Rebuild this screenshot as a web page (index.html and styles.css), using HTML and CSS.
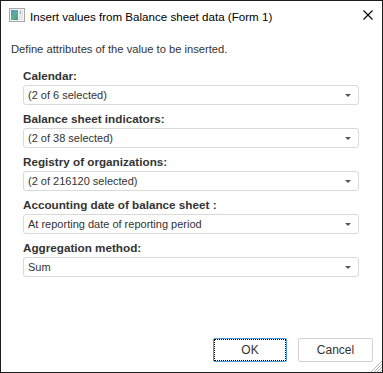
FILE: index.html
```html
<!DOCTYPE html>
<html>
<head>
<meta charset="utf-8">
<link rel="stylesheet" href="styles.css">
</head>
<body>
<div class="window">
  <div class="titlebar">
    <svg class="app-icon" width="16" height="14" viewBox="0 0 16 14">
      <defs>
        <linearGradient id="g" x1="0" y1="0" x2="1" y2="1">
          <stop offset="0" stop-color="#5a8fc0"/>
          <stop offset="0.5" stop-color="#5fae9a"/>
          <stop offset="1" stop-color="#3f9a7a"/>
        </linearGradient>
      </defs>
      <rect x="0.5" y="0.5" width="15" height="13" fill="#f4f4f4" stroke="#a8a8a8"/>
      <rect x="2" y="2" width="7" height="10" fill="url(#g)"/>
      <rect x="10" y="2" width="4" height="10" fill="#e6e6e6"/>
      <rect x="11" y="3" width="1" height="3" fill="#8fb3cf"/>
    </svg>
    <span class="title">Insert values from Balance sheet data (Form 1)</span>
    <svg class="close" width="10" height="10" viewBox="0 0 10 10">
      <path d="M0.5 0.5 L9.5 9.5 M9.5 0.5 L0.5 9.5" stroke="#000" stroke-width="1.1" fill="none"/>
    </svg>
  </div>
  <div class="content">
    <p class="desc">Define attributes of the value to be inserted.</p>
    <div class="form">
      <div class="field">
        <div class="label">Calendar:</div>
        <div class="select"><span>(2 of 6 selected)</span><i class="arrow"></i></div>
      </div>
      <div class="field">
        <div class="label">Balance sheet indicators:</div>
        <div class="select"><span>(2 of 38 selected)</span><i class="arrow"></i></div>
      </div>
      <div class="field">
        <div class="label">Registry of organizations:</div>
        <div class="select"><span>(2 of 216120 selected)</span><i class="arrow"></i></div>
      </div>
      <div class="field">
        <div class="label">Accounting date of balance sheet :</div>
        <div class="select"><span>At reporting date of reporting period</span><i class="arrow"></i></div>
      </div>
      <div class="field">
        <div class="label">Aggregation method:</div>
        <div class="select"><span>Sum</span><i class="arrow"></i></div>
      </div>
    </div>
    <div class="buttons">
      <button class="btn btn-default"><span class="focus">OK</span></button>
      <button class="btn">Cancel</button>
    </div>
  </div>
  <svg class="grip" width="12" height="12" viewBox="0 0 12 12">
    <path d="M12 1 L1 12 M12 4 L4 12 M12 7 L7 12 M12 10 L10 12" stroke="#b4b4b4" stroke-width="1" fill="none"/>
  </svg>
</div>
</body>
</html>
```
FILE: styles.css
```css
html, body {
  margin: 0;
  padding: 0;
  background: #fff;
}
body {
  font-family: "Liberation Sans", Arial, sans-serif;
  color: #333;
}
.window {
  position: relative;
  box-sizing: border-box;
  width: 383px;
  height: 373px;
  border: 1px solid #1c1c1c;
  background: #fff;
  display: flex;
  flex-direction: column;
}
.titlebar {
  height: 30px;
  flex: none;
  display: flex;
  align-items: flex-start;
  padding-top: 7px;
  box-sizing: border-box;
}
.app-icon {
  margin-left: 8px;
  flex: none;
}
.title {
  margin-left: 5px;
  margin-top: 1px;
  font-size: 11.6px;
  line-height: 16px;
  color: #000;
}
.close {
  margin-left: auto;
  margin-right: 9px;
  margin-top: 2px;
  flex: none;
}
.content {
  flex: 1;
  display: flex;
  flex-direction: column;
}
.desc {
  margin: 10px 0 0 10px;
  font-size: 11.2px;
  line-height: 16px;
  color: #333;
}
.form {
  margin: 11px 23px 0 22px;
  display: flex;
  flex-direction: column;
  gap: 6px;
}
.field {
  display: flex;
  flex-direction: column;
  gap: 1px;
}
.label {
  font-weight: bold;
  font-size: 11.7px;
  line-height: 16px;
  color: #333;
}
.select {
  box-sizing: border-box;
  height: 20px;
  border: 1px solid #d9d9d9;
  border-radius: 3px;
  display: flex;
  align-items: center;
  padding: 0 7px 0 4px;
  font-size: 11px;
  line-height: 18px;
  color: #333;
}
.select span {
  flex: 1;
}
.arrow {
  width: 0;
  height: 0;
  border-left: 3px solid transparent;
  border-right: 3px solid transparent;
  border-top: 3px solid #555;
  margin-top: 1px;
}
.buttons {
  margin-top: auto;
  margin-bottom: 10px;
  margin-right: 9px;
  display: flex;
  justify-content: flex-end;
  gap: 11px;
}
.btn {
  box-sizing: border-box;
  width: 75px;
  height: 24px;
  padding: 0;
  border: 1px solid #d2d2d2;
  border-radius: 2px;
  background: #fff;
  font-family: "Liberation Sans", Arial, sans-serif;
  font-size: 12px;
  color: #333;
}
.btn-default {
  width: 74px;
  border-color: #4a9bdc;
  padding: 0;
  display: flex;
}
.focus {
  flex: 1;
  border: 1px dotted #000;
  display: flex;
  align-items: center;
  justify-content: center;
}
.grip {
  position: absolute;
  right: 0;
  bottom: 0;
}
```
